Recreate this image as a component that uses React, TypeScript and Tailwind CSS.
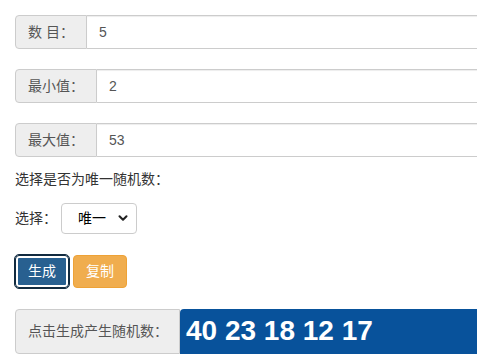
import { ChevronDown } from "lucide-react";

const font = { fontFamily: '"Liberation Sans", "Noto Sans CJK SC", sans-serif' };

function Field({ label, value }: { label: string; value: string }) {
  return (
    <div className="flex h-[34px] w-[620px] text-[14px] text-[#555]">
      <div className="flex items-center px-3 bg-[#eee] border border-[#ccc] rounded-l-[4px] whitespace-nowrap leading-none">
        {label}
      </div>
      <div className="flex-1 flex items-center pl-3 bg-white border border-l-0 border-[#ccc] shadow-[inset_0_1px_1px_rgba(0,0,0,0.075)] leading-none">
        {value}
      </div>
    </div>
  );
}

export default function App() {
  return (
    <div
      className="w-[477px] h-[354px] overflow-hidden bg-white pl-[15px] pt-[15px] flex flex-col"
      style={font}
    >
      <Field label="数 目：" value="5" />
      <div className="mt-[20px]">
        <Field label="最小值：" value="2" />
      </div>
      <div className="mt-[20px]">
        <Field label="最大值：" value="53" />
      </div>

      <p className="mt-[12px] text-[14px] leading-[20px] text-[#333]">选择是否为唯一随机数：</p>

      <div className="mt-[14px] flex items-center gap-[4px] text-[14px] text-[#333]">
        <span className="leading-none">选择：</span>
        <div className="flex items-center justify-between w-[76px] h-[31px] border border-[#ccc] rounded-[4px] bg-white pl-[16px] pr-[6px]">
          <span className="leading-none text-black">唯一</span>
          <ChevronDown className="w-[14px] h-[14px] text-[#222]" strokeWidth={3.5} />
        </div>
      </div>

      <div className="mt-[21px] flex gap-[4px]">
        <button className="w-[54px] h-[33px] rounded-[4px] bg-[#286090] text-white text-[14px] leading-none border border-[#122b40] outline outline-1 outline-[#122b40] ring-1 ring-inset ring-white shadow-[inset_0_0_0_2px_#ffffff]">
          生成
        </button>
        <button className="w-[54px] h-[33px] rounded-[4px] bg-[#f0ad4e] text-white text-[14px] leading-none border border-[#eea236]">
          复制
        </button>
      </div>

      <div className="mt-[21px] flex h-[46px]">
        <div className="flex items-center px-3 w-[165px] bg-[#eee] border border-[#ccc] rounded-l-[4px] text-[14px] text-[#555] leading-none whitespace-nowrap">
          点击生成产生随机数：
        </div>
        <div className="flex-1 flex items-center pl-[6px] bg-[#08529b] rounded-tl-[4px] text-white font-bold text-[28px] leading-none whitespace-nowrap">
          40 23 18 12 17
        </div>
      </div>
    </div>
  );
}
